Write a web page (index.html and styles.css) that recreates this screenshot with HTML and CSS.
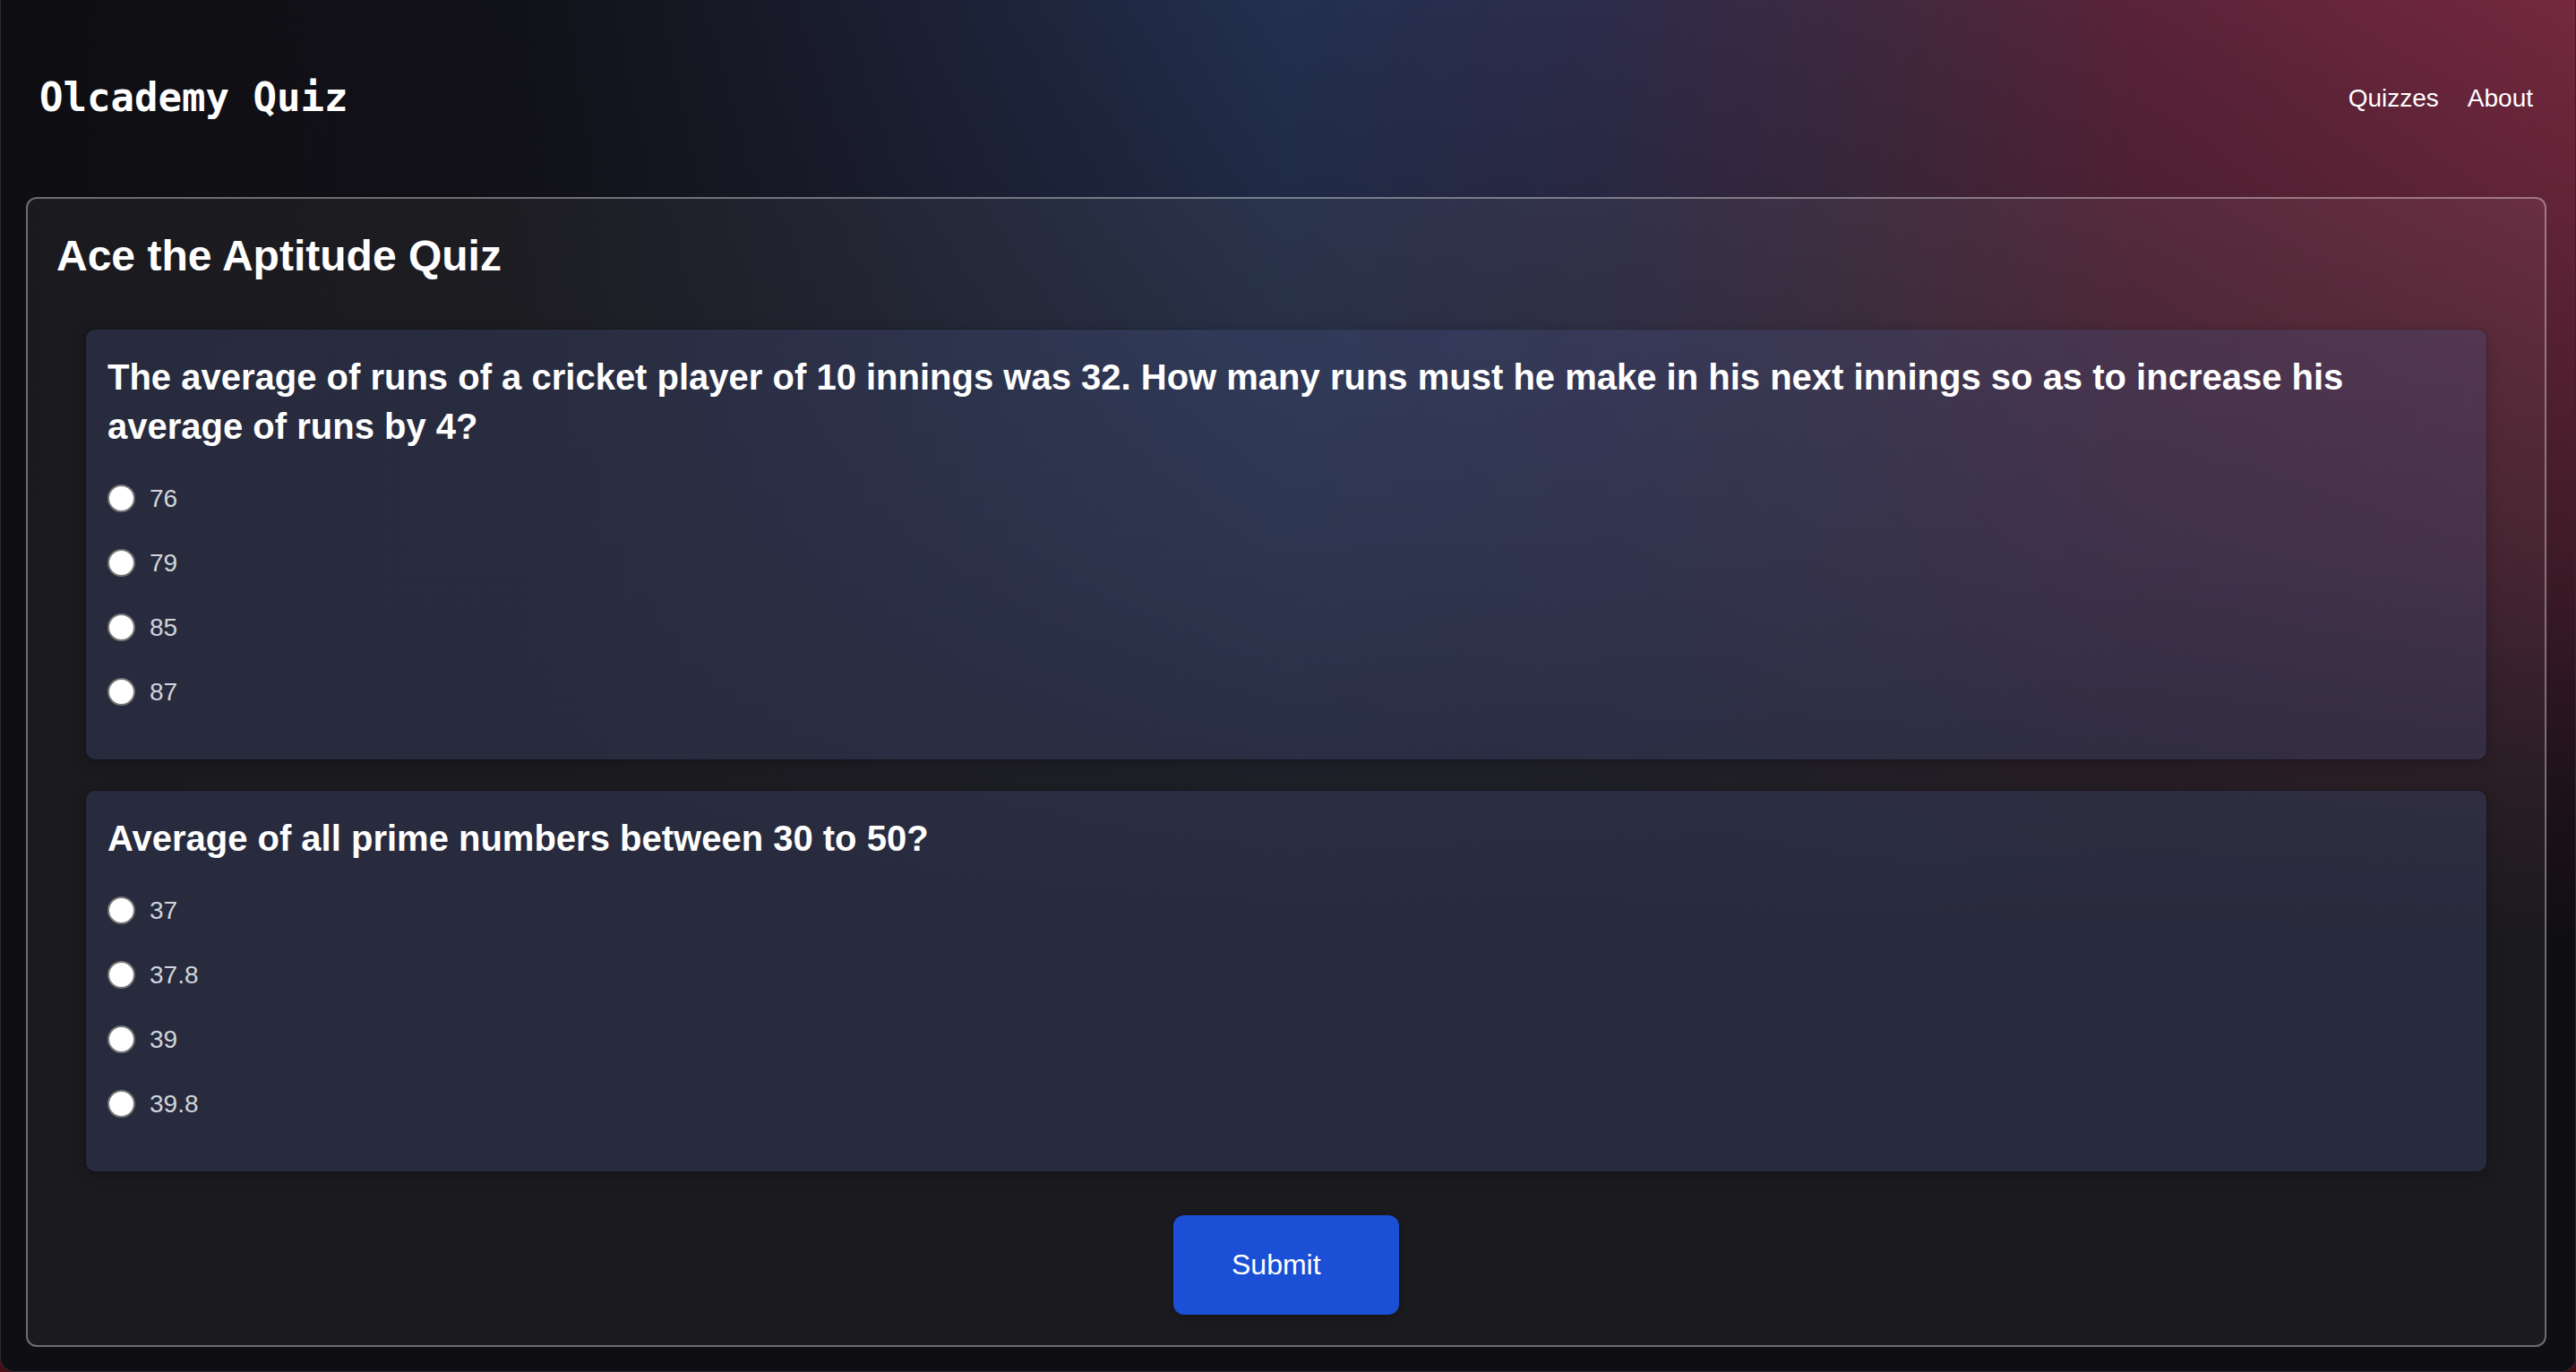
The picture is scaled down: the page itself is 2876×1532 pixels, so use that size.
FILE: index.html
```html
<!DOCTYPE html>
<html lang="en">
<head>
<meta charset="utf-8">
<title>Olcademy Quiz</title>
<link rel="stylesheet" href="styles.css">
</head>
<body>
<div class="window">
  <header class="topbar">
    <div class="logo">Olcademy Quiz</div>
    <nav class="nav">
      <a class="nav-link" href="#">Quizzes</a>
      <a class="nav-link" href="#">About</a>
    </nav>
  </header>
  <main class="panel">
    <h1 class="panel-title">Ace the Aptitude Quiz</h1>
    <form class="quiz">
      <section class="question-card">
        <h2 class="question">The average of runs of a cricket player of 10 innings was 32. How many runs must he make in his next innings so as to increase his average of runs by 4?</h2>
        <div class="options">
          <label class="option"><input class="radio" type="radio" name="q1"><span class="option-text">76</span></label>
          <label class="option"><input class="radio" type="radio" name="q1"><span class="option-text">79</span></label>
          <label class="option"><input class="radio" type="radio" name="q1"><span class="option-text">85</span></label>
          <label class="option"><input class="radio" type="radio" name="q1"><span class="option-text">87</span></label>
        </div>
      </section>
      <section class="question-card">
        <h2 class="question">Average of all prime numbers between 30 to 50?</h2>
        <div class="options">
          <label class="option"><input class="radio" type="radio" name="q2"><span class="option-text">37</span></label>
          <label class="option"><input class="radio" type="radio" name="q2"><span class="option-text">37.8</span></label>
          <label class="option"><input class="radio" type="radio" name="q2"><span class="option-text">39</span></label>
          <label class="option"><input class="radio" type="radio" name="q2"><span class="option-text">39.8</span></label>
        </div>
      </section>
      <div class="actions">
        <button class="submit" type="button">Submit</button>
      </div>
    </form>
  </main>
</div>
</body>
</html>
```

FILE: styles.css
```css
html {
  background: #4a0d18;
}

body {
  margin: 0;
  font-family: "Liberation Sans", Arial, Helvetica, sans-serif;
  color: #ffffff;
}

.window {
  box-sizing: border-box;
  height: 1532px;
  overflow: hidden;
  border: 1px solid #2a2a30;
  border-top: none;
  border-radius: 0 0 16px 16px;
  background-color: #0f0e13;
  background-image:
    linear-gradient(to bottom, rgba(15, 14, 19, 0) 0px, rgba(15, 14, 19, 0.15) 200px, rgba(15, 14, 19, 0.5) 600px, rgba(15, 14, 19, 0.85) 880px, rgba(15, 14, 19, 1) 1050px),
    linear-gradient(to right, #0e0e12 0%, #111118 20%, #1a1d2e 33%, #23304f 50%, #2d2c4b 62%, #40293f 73%, #5a2338 83%, #74283f 100%);
  display: flex;
  flex-direction: column;
}

.topbar {
  height: 220px;
  flex: none;
  display: flex;
  align-items: center;
  justify-content: space-between;
  padding: 0 47px 0 43px;
}

.logo {
  font-family: "DejaVu Sans Mono", "Liberation Mono", monospace;
  font-weight: bold;
  font-size: 44px;
  color: #ffffff;
  margin-bottom: 4px;
}

.nav {
  display: flex;
  gap: 32px;
}

.nav-link {
  font-size: 28px;
  color: #ffffff;
  text-decoration: none;
}

.panel {
  margin: 0 32px 0 28px;
  border: 2px solid rgba(255, 255, 255, 0.36);
  border-radius: 12px;
  background: rgba(255, 255, 255, 0.05);
  padding: 35px 32px 34px 32px;
}

.panel-title {
  margin: 0 0 53px 0;
  font-size: 48px;
  line-height: 1.2;
  font-weight: bold;
  color: #ffffff;
}

.quiz {
  display: flex;
  flex-direction: column;
  padding: 0 33px;
}

.question-card {
  background: rgba(70, 83, 134, 0.3);
  border-radius: 10px;
  padding: 26px 24px 57px 24px;
  margin-bottom: 35px;
  box-shadow: 0 0 0 1px rgba(0, 0, 0, 0.12), 0 4px 16px rgba(0, 0, 0, 0.22);
}

.question-card:last-of-type {
  margin-bottom: 49px;
}

.question {
  margin: 0 0 35px 0;
  font-size: 40px;
  line-height: 55px;
  font-weight: bold;
  color: #ffffff;
}

.options {
  display: flex;
  flex-direction: column;
  gap: 36px;
}

.option {
  display: flex;
  align-items: center;
  height: 36px;
  gap: 16px;
}

.radio {
  appearance: none;
  -webkit-appearance: none;
  margin: 0;
  width: 31px;
  height: 31px;
  border-radius: 50%;
  background: #ffffff;
  border: 2px solid #767676;
  box-sizing: border-box;
  flex: none;
}

.option-text {
  font-size: 28px;
  color: #d1d5db;
}

.actions {
  display: flex;
  justify-content: center;
}

.submit {
  box-sizing: border-box;
  width: 252px;
  height: 111px;
  border: none;
  border-radius: 12px;
  background: #1a4fd6;
  color: #ffffff;
  font-family: "Liberation Sans", Arial, Helvetica, sans-serif;
  font-size: 32px;
  text-align: left;
  padding: 0 0 0 65px;
  box-shadow: 0 2px 8px rgba(0, 0, 0, 0.25);
}
```
